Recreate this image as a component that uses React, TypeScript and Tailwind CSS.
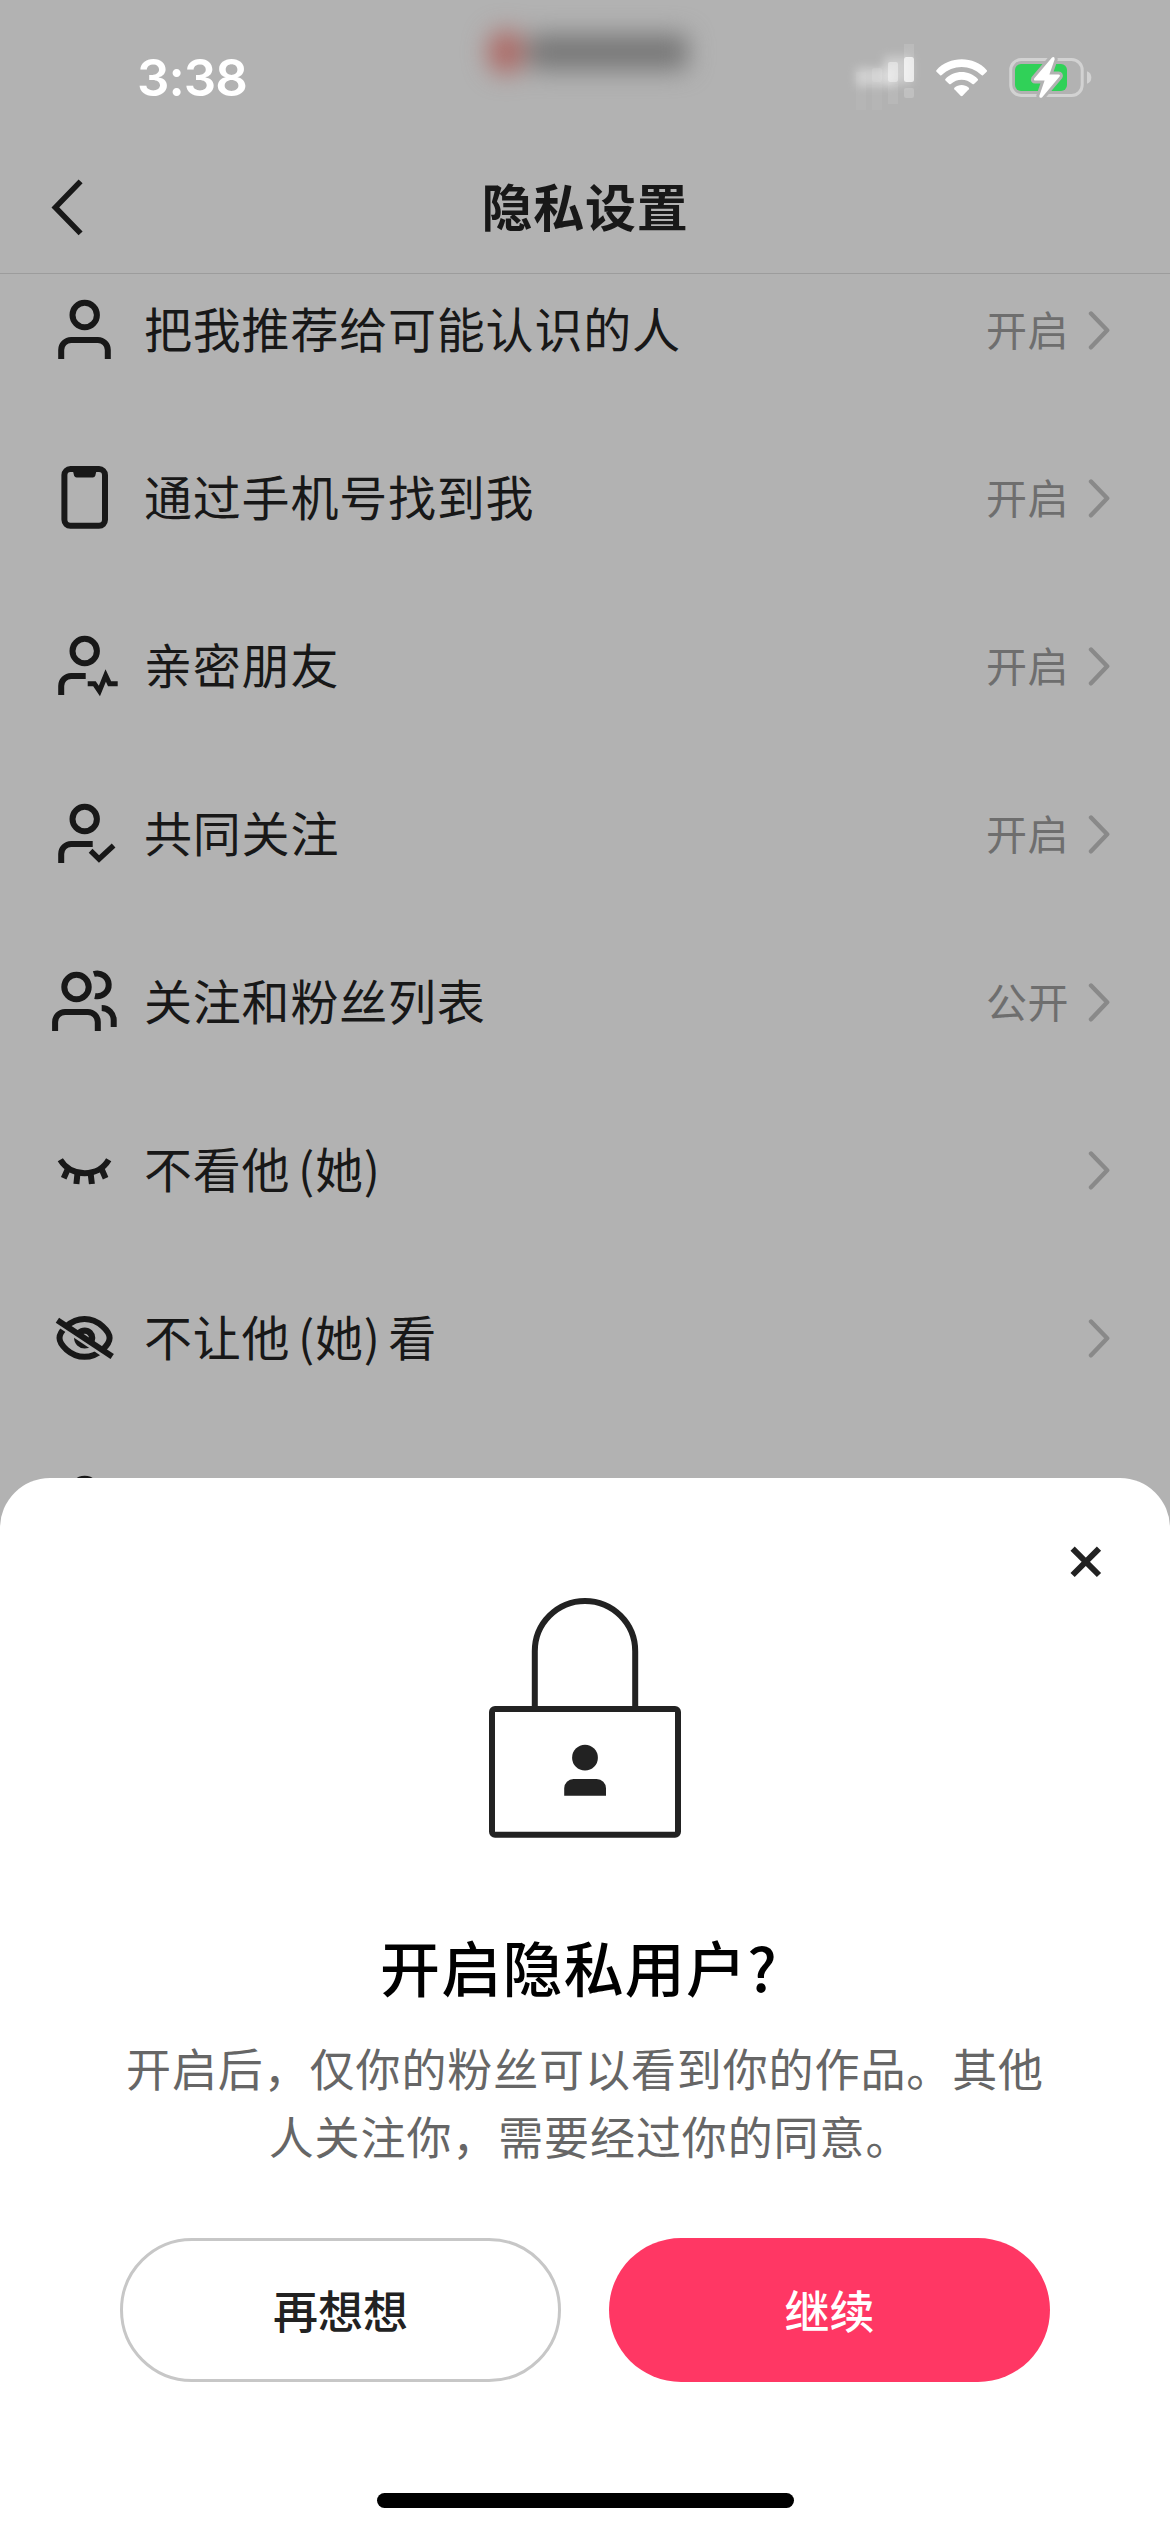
import type { ReactNode } from 'react';
import { clsx } from 'clsx';

interface SettingItem {
  icon: ReactNode;
  label: string;
  value?: string;
}

/** 列表图标的公共画布 */
function RowIcon({ children }: { children?: ReactNode }) {
  return (
    <svg viewBox="0 0 72 72" className="size-[72px] shrink-0" fill="none" stroke="currentColor" strokeWidth="6">
      {children}
    </svg>
  );
}

const PersonIcon = (
  <RowIcon>
    <circle cx="36.7" cy="21" r="12.2" />
    <path d="M13.2 65V56a10 10 0 0 1 10-10H49.8a10 10 0 0 1 10 10V65" />
  </RowIcon>
);

const PhoneIcon = (
  <RowIcon>
    <rect x="16.4" y="7" width="40.6" height="56.8" rx="6" />
    <path d="M24.7 8H48.7L47.3 13.5Q46.8 15.4 44.8 15.4H28.6Q26.6 15.4 26.1 13.5Z" fill="currentColor" stroke="none" />
  </RowIcon>
);

const CloseFriendIcon = (
  <RowIcon>
    <circle cx="36.7" cy="21" r="12.2" />
    <path d="M13.2 65V56a10 10 0 0 1 10-10H37.7" />
    <path d="M39.7 53.7H46.4L51.4 61L57.7 45.5L61.6 53.7H69.7" strokeWidth="5" />
  </RowIcon>
);

const MutualIcon = (
  <RowIcon>
    <circle cx="36.7" cy="21" r="12.2" />
    <path d="M13.2 65V56a10 10 0 0 1 10-10H44.7" />
    <path d="M42.6 52.8L51 61L65.6 47.4" strokeWidth="5.4" />
  </RowIcon>
);

const UsersIcon = (
  <RowIcon>
    <circle cx="28.5" cy="21" r="12.2" />
    <path d="M7.1 65V56a10 10 0 0 1 10-10H39.8a10 10 0 0 1 10 10V65" />
    <path d="M45.8 8A11.4 11.4 0 1 1 46.9 30" />
    <path d="M53.7 42a12 12 0 0 1 12 12V61" />
  </RowIcon>
);

const EyeClosedIcon = (
  <RowIcon>
    <path d="M12.3 25.8C23 43.6 50.5 43.6 60.7 25.8" />
    <path d="M19.4 36L15.7 44.2M29.4 40L28.4 50M42.7 40L43.9 50M54 36L57.6 44.2" />
  </RowIcon>
);

const EyeOffIcon = (
  <RowIcon>
    <path d="M11.5 36C11.5 30 22 17 36.5 17S61.6 30 61.6 36S51 54.8 36.5 54.8S11.5 42 11.5 36Z" />
    <circle cx="36.7" cy="36" r="7.4" strokeWidth="6.4" />
    <path d="M5 19.6L62.4 58" stroke="#b2b2b2" strokeWidth="3.4" />
    <path d="M9.4 18.2L64.2 54.6" />
  </RowIcon>
);

const SETTINGS: SettingItem[] = [
  { icon: PersonIcon, label: '把我推荐给可能认识的人', value: '开启' },
  { icon: PhoneIcon, label: '通过手机号找到我', value: '开启' },
  { icon: CloseFriendIcon, label: '亲密朋友', value: '开启' },
  { icon: MutualIcon, label: '共同关注', value: '开启' },
  { icon: UsersIcon, label: '关注和粉丝列表', value: '公开' },
  { icon: EyeClosedIcon, label: '不看他 (她)' },
  { icon: EyeOffIcon, label: '不让他 (她) 看' },
  { icon: PersonIcon, label: '' },
];

/** 状态栏 */
function StatusBar() {
  return (
    <div className="relative flex h-36 items-start justify-between pl-[137px] pr-[78px] text-white">
      <span className="mt-[47px] font-[Inter] text-[51px] font-semibold leading-[62px] tracking-[-1px]">3:38</span>

      {/* 灵动岛内容，模糊处理 */}
      <div className="absolute left-[488px] top-[30px] flex items-center blur-[12px]">
        <div className="h-[44px] w-[36px] rounded-full bg-[#ad6a66]" />
        <div className="ml-1 h-[36px] w-[160px] rounded-lg bg-[#787878]" />
      </div>

      <svg viewBox="0 0 244 70" className="mt-[42px] h-[70px] w-[244px] overflow-visible">
        <defs>
          <filter id="soft" x="-60%" y="-80%" width="220%" height="260%">
            <feGaussianBlur stdDeviation="5" />
          </filter>
        </defs>
        {/* 信号 */}
        <g fill="#fff">
          <rect x="8" y="26" width="38" height="18" opacity="0.38" filter="url(#soft)" />
          <rect x="36" y="14" width="28" height="28" opacity="0.35" filter="url(#soft)" />
          <rect x="8" y="30" width="10" height="38" opacity="0.05" />
          <rect x="24" y="26" width="10" height="14" rx="2" opacity="0.12" />
          <rect x="24" y="40" width="10" height="28" opacity="0.05" />
          <rect x="40" y="20" width="10" height="20" rx="2" opacity="0.4" />
          <rect x="40" y="40" width="10" height="22" opacity="0.08" />
          <rect x="56" y="2" width="10" height="14" opacity="0.12" />
          <rect x="56" y="15" width="10" height="25" rx="2.5" opacity="0.7" />
          <rect x="56" y="46" width="10" height="10" rx="2" opacity="0.18" />
        </g>
        {/* Wi-Fi */}
        <g fill="#fff">
          <path d="M88.4 28.2C101.5 13.7 126 13.7 138.8 28.2Q139.4 29 138.7 29.7L135 33.2Q134.2 33.9 133.4 33.1C122.5 22.4 104.8 22.4 93.8 33.1Q93 33.9 92.2 33.2L88.5 29.7Q87.8 29 88.4 28.2Z" />
          <path d="M97.4 37C106 27.8 121.2 27.8 129.8 37Q130.5 37.8 129.7 38.5L126 42Q125.2 42.7 124.4 42C118.3 36.2 109 36.2 102.8 42Q102 42.7 101.2 42L97.5 38.5Q96.7 37.8 97.4 37Z" />
          <path d="M106.4 45.8C110.5 42.1 116.7 42.1 120.8 45.8Q121.5 46.5 120.8 47.3L114.6 53.7Q113.6 54.6 112.6 53.7L106.4 47.3Q105.7 46.5 106.4 45.8Z" />
        </g>
        {/* 电池 */}
        <rect x="162.7" y="17.5" width="71.5" height="36" rx="10.5" fill="none" stroke="#d2d2d2" strokeWidth="3" />
        <path d="M239 29.2Q243.3 30.8 243.3 35.5T239 41.8Z" fill="#d2d2d2" />
        <rect x="167" y="22" width="52" height="27" rx="6" fill="#30d158" />
        <path
          d="M204 15.5L186.2 36.6Q185.3 38.6 187.4 38.6H196.6L191.3 54Q191.4 56.8 194 55.4L211.6 34.6Q212.6 32.6 210.5 32.6H201.4L206.7 17.2Q206.6 14.2 204 15.5Z"
          fill="#fff"
          stroke="#b2b2b2"
          strokeWidth="6"
          paintOrder="stroke"
        />
      </svg>
    </div>
  );
}

function NavBar() {
  return (
    <header className="flex h-[130px] items-center justify-between border-b border-[#9c9c9c] px-12 pb-1">
      <svg viewBox="0 0 40 60" className="h-[60px] w-10" fill="none" stroke="#181818" strokeWidth="5.6">
        <path d="M32.6 4.4L7.4 30.4L32.6 56.4" />
      </svg>
      <h1 className="pb-1 text-[51px] font-bold leading-[72px] tracking-[0.8px]">隐私设置</h1>
      <div className="w-10" />
    </header>
  );
}

function SettingRow({ icon, label, value }: SettingItem) {
  return (
    <li className="flex h-[168px] items-center pl-12 pr-[60px]">
      {icon}
      <span className="ml-6 flex-1 pb-1.5 text-[48px] leading-[72px] tracking-[0.8px] [word-spacing:-4px]">{label}</span>
      {value && (
        <span className="mr-[19px] pb-[5px] text-[41px] leading-[60px] tracking-[0.5px] text-[#6e6e6e]">{value}</span>
      )}
      <svg viewBox="0 0 22 40" className="h-10 w-[22px]" fill="none" stroke="#898989" strokeWidth="4.4" strokeLinecap="round" strokeLinejoin="round">
        <path d="M3 3.5L19.2 20.3L3 37.3" />
      </svg>
    </li>
  );
}

function LockIcon() {
  return (
    <svg viewBox="0 0 192 240" className="h-[240px] w-[192px]" fill="none" stroke="#222" strokeWidth="6">
      <path d="M45.8 111V53.3a50.2 50.3 0 0 1 100.4 0V111" />
      <rect x="3" y="111" width="186" height="125.7" rx="3" />
      <g fill="#222" stroke="none">
        <circle cx="96" cy="159.7" r="12.9" />
        <path d="M75.2 197.7V190.3a9.3 9.3 0 0 1 9.3-9.3H107.7a9.3 9.3 0 0 1 9.3 9.3V197.7Z" />
      </g>
    </svg>
  );
}

interface SheetButtonProps {
  primary?: boolean;
  children: ReactNode;
}

function SheetButton({ primary, children }: SheetButtonProps) {
  return (
    <button
      className={clsx(
        'flex h-36 w-full items-center justify-center rounded-full text-[45px] font-medium',
        primary ? 'bg-[#ff3764] text-white' : 'border-[3px] border-[#c7c7c7] bg-white text-[#222]',
      )}
    >
      {children}
    </button>
  );
}

/** 底部确认弹层 */
function PrivacySheet() {
  return (
    <section className="absolute inset-x-0 bottom-0 flex h-[1054px] flex-col items-center rounded-t-[50px] bg-white">
      <button className="absolute right-[66px] top-[66px]" aria-label="关闭">
        <svg viewBox="0 0 36 36" className="size-9" stroke="#222" strokeWidth="6">
          <path d="M4.6 4.6L31 31M31 4.6L4.6 31" />
        </svg>
      </button>

      <div className="mt-[120px]">
        <LockIcon />
      </div>
      <h2 className="mt-[86px] pr-3 text-[60px] font-medium leading-[84px] tracking-[1.2px] text-black">开启隐私用户?</h2>
      <p className="mt-[26px] text-center text-[45px] leading-[68px] tracking-[0.9px] text-[#666]">
        开启后，仅你的粉丝可以看到你的作品。其他
        <br />
        <span className="pl-2.5">人关注你，需要经过你的同意。</span>
      </p>
      <div className="mt-[68px] grid w-full grid-cols-2 gap-12 px-[120px]">
        <SheetButton>再想想</SheetButton>
        <SheetButton primary>继续</SheetButton>
      </div>
      <div className="mt-auto mb-6 h-[15px] w-[417px] rounded-full bg-black" />
    </section>
  );
}

export default function App() {
  return (
    <div className="relative h-[2532px] w-[1170px] overflow-hidden bg-[#b2b2b2] font-['Noto_Sans_CJK_SC',sans-serif] text-[#181818]">
      <StatusBar />
      <NavBar />
      <main className="overflow-hidden">
        <ul className="-mt-7">
          {SETTINGS.map((item, index) => (
            <SettingRow key={index} {...item} />
          ))}
        </ul>
      </main>
      <PrivacySheet />
    </div>
  );
}
